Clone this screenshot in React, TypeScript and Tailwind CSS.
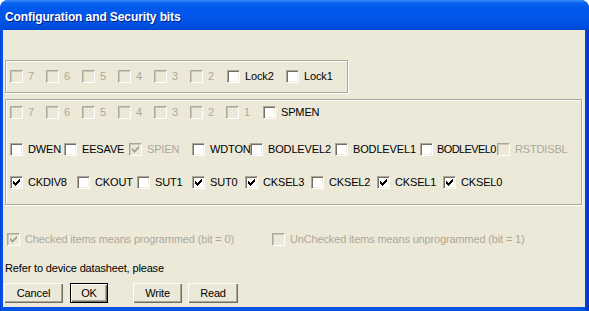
import type { ReactNode } from "react"

type Item = { label: string; w: string; checked?: boolean; disabled?: boolean; tight?: boolean }

function CheckMark({ color }: { color: string }) {
  return (
    <svg width="13" height="13" viewBox="0 0 13 13" className="absolute -left-px -top-px" shapeRendering="crispEdges">
      <path
        transform="translate(3,3)"
        fill={color}
        d="M6 0h1v1h-1z M5 1h2v1h-2z M0 2h1v1h-1z M4 2h3v1h-3z M0 3h2v1h-2z M3 3h3v1h-3z M0 4h5v1h-5z M1 5h3v1h-3z M2 6h1v1h-1z"
      />
    </svg>
  )
}

function Box({ checked, disabled }: { checked?: boolean; disabled?: boolean }) {
  return (
    <div
      className={`relative w-[13px] h-[13px] shrink-0 border border-t-[#ACA899] border-l-[#ACA899] border-r-white border-b-white ${
        disabled
          ? "bg-[#ECE9D8] shadow-[inset_1px_1px_0_#CAC8BB]"
          : "bg-white shadow-[inset_1px_1px_0_#716F64,inset_-1px_-1px_0_#F1EFE2]"
      }`}
    >
      {checked && <CheckMark color={disabled ? "#ACA899" : "#000"} />}
    </div>
  )
}

function Check({ label, w, checked, disabled, tight }: Item) {
  return (
    <div className={`flex items-center h-[13px] shrink-0 overflow-hidden ${w}`}>
      <Box checked={checked} disabled={disabled} />
      <span
        className={`whitespace-nowrap leading-none ${tight ? "ml-[4px] tracking-[-0.6px]" : "ml-[5px]"} ${
          disabled ? "text-[#ACA899]" : "text-black"
        }`}
      >
        {label}
      </span>
    </div>
  )
}

function Row({ items, className = "" }: { items: Item[]; className?: string }) {
  return (
    <div className={`flex h-[13px] ${className}`}>
      {items.map((it) => (
        <Check key={it.label} {...it} />
      ))}
    </div>
  )
}

function Group({ className, children }: { className: string; children: ReactNode }) {
  return (
    <div className={`border border-[#ACA899] shadow-[inset_1px_1px_0_#fff,1px_1px_0_#fff] ${className}`}>{children}</div>
  )
}

function Btn({ label, w, def }: { label: string; w: string; def?: boolean }) {
  return (
    <button
      type="button"
      className={`h-[20px] ${w} bg-[#ECE9D8] text-[11px] tracking-[-0.15px] text-black leading-none ${
        def
          ? "border border-black shadow-[inset_1px_1px_0_#fff,inset_-1px_-1px_0_#716F64,inset_-2px_-2px_0_#ACA899]"
          : "shadow-[inset_1px_1px_0_#fff,inset_-1px_-1px_0_#716F64,inset_-2px_-2px_0_#ACA899]"
      }`}
    >
      {label}
    </button>
  )
}

const dis = (label: string, w = "w-[36px]"): Item => ({ label, w, disabled: true })

const lockRow: Item[] = [
  dis("7"), dis("6"), dis("5"), dis("4"), dis("3"), dis("2", "w-[37px]"),
  { label: "Lock2", w: "w-[59px]" },
  { label: "Lock1", w: "w-[60px]" },
]

const highRow: Item[] = [
  dis("7"), dis("6"), dis("5"), dis("4"), dis("3"), dis("2"), dis("1", "w-[37px]"),
  { label: "SPMEN", w: "w-[80px]" },
]

const midRow: Item[] = [
  { label: "DWEN", w: "w-[54px]" },
  { label: "EESAVE", w: "w-[65px]" },
  { label: "SPIEN", w: "w-[63px]", checked: true, disabled: true },
  { label: "WDTON", w: "w-[58px]" },
  { label: "BODLEVEL2", w: "w-[85px]" },
  { label: "BODLEVEL1", w: "w-[85px]" },
  { label: "BODLEVEL0", w: "w-[77px]", tight: true },
  { label: "RSTDISBL", w: "w-[78px]", disabled: true },
]

const lowRow: Item[] = [
  { label: "CKDIV8", w: "w-[67px]", checked: true },
  { label: "CKOUT", w: "w-[60px]" },
  { label: "SUT1", w: "w-[55px]" },
  { label: "SUT0", w: "w-[53px]", checked: true },
  { label: "CKSEL3", w: "w-[66px]", checked: true },
  { label: "CKSEL2", w: "w-[66px]" },
  { label: "CKSEL1", w: "w-[66px]", checked: true },
  { label: "CKSEL0", w: "w-[66px]", checked: true },
]

export default function App() {
  return (
    <div className="w-[589px] h-[311px] flex flex-col bg-[#0054E3] rounded-t-[8px] font-['Liberation_Sans',Arial,sans-serif] text-[11px] tracking-[-0.15px] overflow-hidden">
      <div className="h-[30px] shrink-0 flex items-center pl-[5px] rounded-t-[8px] bg-[linear-gradient(to_bottom,#3D8EFA_0px,#0A62F0_3px,#0058EE_8px,#0055E8_18px,#0050E0_26px,#0046D2_30px)]">
        <span className="text-white font-bold text-[12px] tracking-[-0.1px] [text-shadow:1px_1px_0_#0A1E7E] pt-[4px]">
          Configuration and Security bits
        </span>
      </div>
      <div className="flex-1 flex pl-[3px] pr-[4px] pb-[4px] bg-[linear-gradient(to_right,#0831D9_0,#0054E3_1px,#0054E3_585px,#0041C8_586px,#0831D9_588px)]">
        <div className="flex-1 bg-[#ECE9D8] flex flex-col">
          <Group className="ml-[2px] mt-[30px] w-[343px] h-[33px] flex items-center pl-[4px]">
            <Row items={lockRow} />
          </Group>
          <Group className="ml-[2px] mt-[6px] w-[577px] pl-[4px] pt-[6px] pb-[15px]">
            <Row items={highRow} />
            <Row items={midRow} className="mt-[24px]" />
            <Row items={lowRow} className="mt-[20px]" />
          </Group>
          <div className="flex mt-[28px] ml-[4px]">
            <Check label="Checked items means programmed (bit = 0)" w="w-[265px]" checked disabled />
            <Check label="UnChecked items means unprogrammed (bit = 1)" w="w-[280px]" disabled />
          </div>
          <div className="mt-[16px] ml-[2px] h-[13px] leading-[13px] text-black">Refer to device datasheet, please</div>
          <div className="flex mt-[8px] ml-[1px]">
            <Btn label="Cancel" w="w-[59px]" />
            <div className="ml-[7px]">
              <Btn label="OK" w="w-[38px]" def />
            </div>
            <div className="ml-[25px]">
              <Btn label="Write" w="w-[49px]" />
            </div>
            <div className="ml-[6px]">
              <Btn label="Read" w="w-[50px]" />
            </div>
          </div>
        </div>
      </div>
    </div>
  )
}
